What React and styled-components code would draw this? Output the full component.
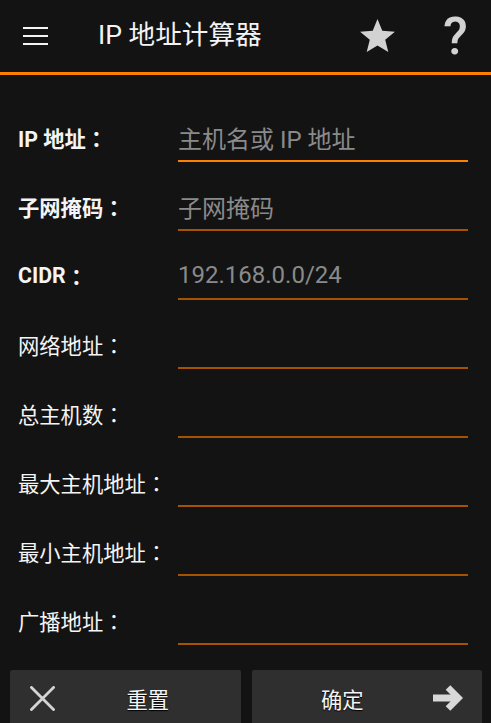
import React from "react";
import styled, { createGlobalStyle } from "styled-components";

const GlobalStyle = createGlobalStyle`
  html, body {
    margin: 0;
    padding: 0;
    background: #131313;
    height: 723px;
    overflow: hidden;
  }
  body {
    font-family: Roboto, "Noto Sans CJK SC", sans-serif;
    color: #f2f2f2;
    text-spacing-trim: space-all;
  }
`;

const Screen = styled.div`
  width: 491px;
  height: 723px;
  background: #131313;
  display: flex;
  flex-direction: column;
`;

const TopBar = styled.div`
  height: 72px;
  border-bottom: 3px solid #ff7f00;
  display: flex;
  align-items: center;
  padding: 0 24px 0 23px;
  flex-shrink: 0;
`;

const MenuButton = styled.div`
  width: 25px;
  display: flex;
  flex-direction: column;
  gap: 6px;

  span {
    display: block;
    height: 2px;
    background: #f4f4f4;
  }
`;

const Title = styled.div`
  margin-left: 50px;
  font-size: 26.6px;
  line-height: 30px;
  color: #f4f4f4;
  flex: 1;
  white-space: nowrap;
  padding-bottom: 2px;
`;

const Actions = styled.div`
  display: flex;
  align-items: center;
  gap: 47px;
`;

const HelpMark = styled.div`
  font-family: Roboto, sans-serif;
  font-weight: 500;
  font-size: 51px;
  line-height: 50px;
  color: #d2d2d2;
  width: 24px;
  text-align: center;
  margin-top: 2px;
`;

const Form = styled.div`
  padding: 18px 0 0 18px;
  display: flex;
  flex-direction: column;
`;

const Row = styled.div`
  height: 69px;
  display: flex;
  align-items: flex-end;
`;

const Label = styled.div`
  width: 160px;
  height: 44px;
  box-sizing: border-box;
  padding-bottom: 5px;
  display: flex;
  align-items: center;
  font-size: 21.3px;
  font-weight: ${(p) => (p.$bold ? 700 : 400)};
  color: #f4f4f4;
  white-space: nowrap;
`;

const Colon = styled.span`
  font-family: "Noto Sans CJK TC", sans-serif;
  display: inline-block;
  width: 1em;
  text-align: center;
`;

const Field = styled.div`
  width: 290px;
  height: 44px;
  box-sizing: border-box;
  padding-bottom: 4px;
  display: flex;
  align-items: center;
  border-bottom: 2px solid ${(p) => (p.$focused ? "#ff8000" : "#a55300")};
  font-size: 24px;
  color: #8a8a8a;
  white-space: nowrap;
`;

const ButtonBar = styled.div`
  margin-top: 25px;
  padding: 0 9px 0 10px;
  display: grid;
  grid-template-columns: 1fr 1fr;
  gap: 11px;
`;

const Button = styled.div`
  height: 56px;
  background: #2f2f2f;
  border-radius: 2px;
  display: flex;
  align-items: center;
  padding: ${(p) => (p.$iconRight ? "0 19px 0 0" : "0 0 0 20px")};
`;

const ButtonText = styled.div`
  flex: 1;
  text-align: center;
  font-size: 21.3px;
  color: #f4f4f4;
  text-shadow: 0 1px 1px #000;
  margin-top: 1px;
`;

const Star = () => (
  <svg width="37" height="36" viewBox="0 0 24 23" fill="#d2d2d2">
    <path d="M12 0.5l3.1 7.6 8.2 0.6-6.3 5.2 2 8-7-4.3-7 4.3 2-8-6.3-5.2 8.2-0.6z" />
  </svg>
);

const CloseIcon = () => (
  <svg width="25" height="25" viewBox="0 0 25 25">
    <path
      d="M1.5 1.5L23.5 23.5M23.5 1.5L1.5 23.5"
      stroke="#d4d4d4"
      strokeWidth="2.8"
      strokeLinecap="square"
    />
  </svg>
);

const ArrowIcon = () => (
  <svg width="30" height="28" viewBox="0 0 30 28">
    <path d="M0 14H25" stroke="#d8d8d8" strokeWidth="7" />
    <path
      d="M15 3.5L25.5 14L15 24.5"
      stroke="#d8d8d8"
      strokeWidth="6.5"
      fill="none"
      strokeLinejoin="miter"
    />
  </svg>
);

const rows = [
  { label: "IP 地址", hint: "主机名或 IP 地址", bold: true, focused: true },
  { label: "子网掩码", hint: "子网掩码", bold: true },
  { label: "CIDR", hint: "192.168.0.0/24", bold: true },
  { label: "网络地址" },
  { label: "总主机数" },
  { label: "最大主机地址" },
  { label: "最小主机地址" },
  { label: "广播地址" },
];

export default function App() {
  return (
    <>
      <GlobalStyle />
      <Screen>
        <TopBar>
          <MenuButton>
            <span />
            <span />
            <span />
          </MenuButton>
          <Title>IP 地址计算器</Title>
          <Actions>
            <Star />
            <HelpMark>?</HelpMark>
          </Actions>
        </TopBar>
        <Form>
          {rows.map((r) => (
            <Row key={r.label}>
              <Label $bold={r.bold}>
                {r.label}
                <Colon>：</Colon>
              </Label>
              <Field $focused={r.focused}>{r.hint || ""}</Field>
            </Row>
          ))}
        </Form>
        <ButtonBar>
          <Button>
            <CloseIcon />
            <ButtonText>重置</ButtonText>
          </Button>
          <Button $iconRight>
            <ButtonText>确定</ButtonText>
            <ArrowIcon />
          </Button>
        </ButtonBar>
      </Screen>
    </>
  );
}
